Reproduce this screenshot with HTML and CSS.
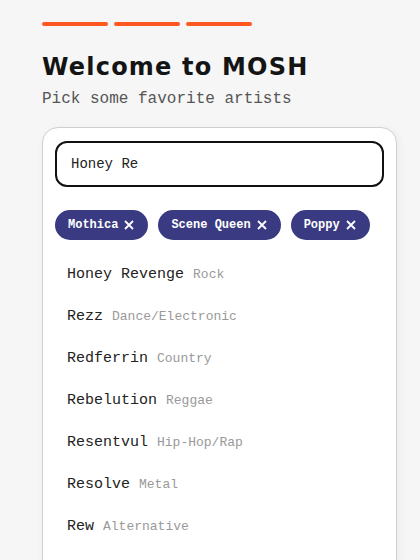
FILE: index.html
```html
<!DOCTYPE html>
<html>
<head>
<meta charset="utf-8">
<link rel="stylesheet" href="styles.css">
</head>
<body>
<main class="page">
  <div class="steps">
    <span class="step"></span><span class="step"></span><span class="step"></span>
  </div>
  <h1 class="title">Welcome to MOSH</h1>
  <p class="subtitle">Pick some favorite artists</p>
  <section class="card">
    <div class="search">Honey Re</div>
    <div class="chips">
      <span class="chip">Mothica <svg class="x" viewBox="0 0 10 10"><path d="M1 1L9 9M9 1L1 9"/></svg></span>
      <span class="chip">Scene Queen <svg class="x" viewBox="0 0 10 10"><path d="M1 1L9 9M9 1L1 9"/></svg></span>
      <span class="chip">Poppy <svg class="x" viewBox="0 0 10 10"><path d="M1 1L9 9M9 1L1 9"/></svg></span>
    </div>
    <ul class="results">
      <li class="row"><span class="name">Honey Revenge</span><span class="genre">Rock</span></li>
      <li class="row"><span class="name">Rezz</span><span class="genre">Dance/Electronic</span></li>
      <li class="row"><span class="name">Redferrin</span><span class="genre">Country</span></li>
      <li class="row"><span class="name">Rebelution</span><span class="genre">Reggae</span></li>
      <li class="row"><span class="name">Resentvul</span><span class="genre">Hip-Hop/Rap</span></li>
      <li class="row"><span class="name">Resolve</span><span class="genre">Metal</span></li>
      <li class="row"><span class="name">Rew</span><span class="genre">Alternative</span></li>
    </ul>
  </section>
</main>
</body>
</html>
```
FILE: styles.css
```css
html, body {
  margin: 0;
  padding: 0;
  background: #f6f6f6;
  height: 100%;
  overflow: hidden;
}
.page {
  padding: 22px 0 0 42px;
  font-family: "Liberation Mono", "DejaVu Sans Mono", monospace;
}
.steps {
  display: flex;
  gap: 6px;
}
.step {
  width: 66px;
  height: 4px;
  border-radius: 2px;
  background: #ff5722;
}
.title {
  margin: 26px 0 0;
  font-family: "DejaVu Sans", sans-serif;
  font-weight: bold;
  font-size: 24px;
  line-height: 30px;
  color: #141414;
  letter-spacing: 1.2px;
}
.subtitle {
  margin: 7px 0 0;
  font-size: 16px;
  line-height: 20px;
  color: #555;
}
.card {
  margin-top: 18px;
  width: 329px;
  height: 500px;
  padding: 13px 12px;
  background: #fff;
  border: 1px solid #cfcfcf;
  border-radius: 16px;
  box-shadow: 2px 2px 10px rgba(0,0,0,0.05);
}
.search {
  height: 42px;
  border: 2px solid #111;
  border-radius: 12px;
  padding: 0 14px;
  display: flex;
  align-items: center;
  font-size: 14px;
  color: #222;
}
.chips {
  display: flex;
  gap: 10px;
  margin-top: 23px;
}
.chip {
  height: 30px;
  border-radius: 15px;
  background: #3a3a82;
  color: #fff;
  font-weight: bold;
  font-size: 12px;
  display: flex;
  align-items: center;
  gap: 6px;
  padding: 0 14px 0 13px;
}
.x {
  width: 10px;
  height: 10px;
  stroke: #fff;
  stroke-width: 1.8;
  fill: none;
}
.results {
  list-style: none;
  margin: 13px 0 0;
  padding: 0 12px;
}
.row {
  height: 42px;
  display: flex;
  align-items: center;
  gap: 9px;
}
.name {
  font-size: 15px;
  color: #222;
}
.genre {
  font-size: 13px;
  color: #999;
}
```
